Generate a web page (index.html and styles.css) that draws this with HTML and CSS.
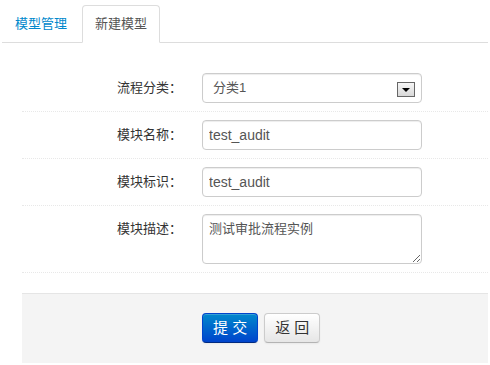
FILE: index.html
```html
<!DOCTYPE html>
<html lang="zh-CN">
<head>
    <meta charset="UTF-8">
    <title>新建模型</title>
    <link rel="stylesheet" href="styles.css">
</head>
<body>
    <ul class="nav-tabs">
        <li><a href="#">模型管理</a></li>
        <li class="active"><a href="#">新建模型</a></li>
    </ul>

    <form class="form-horizontal">
        <div class="control-group">
            <label class="control-label">流程分类：</label>
            <div class="controls">
                <div class="select-wrap">
                    <select>
                        <option>分类1</option>
                    </select>
                    <span class="select-arrow"></span>
                </div>
            </div>
        </div>
        <div class="control-group">
            <label class="control-label">模块名称：</label>
            <div class="controls">
                <input type="text" value="test_audit">
            </div>
        </div>
        <div class="control-group">
            <label class="control-label">模块标识：</label>
            <div class="controls">
                <input type="text" value="test_audit">
            </div>
        </div>
        <div class="control-group">
            <label class="control-label">模块描述：</label>
            <div class="controls">
                <textarea>测试审批流程实例</textarea>
            </div>
        </div>

        <div class="form-actions">
            <button type="button" class="btn btn-primary">提 交</button>
            <button type="button" class="btn">返 回</button>
        </div>
    </form>
</body>
</html>
```

FILE: styles.css
```css
* {
    box-sizing: border-box;
}

body {
    margin: 0;
    padding: 5px 2px 0 2px;
    font-family: "Liberation Sans", "Noto Sans CJK SC", sans-serif;
    font-size: 13px;
    line-height: 20px;
    color: #333;
    background: #fff;
}

/* tabs */
.nav-tabs {
    list-style: none;
    margin: 0 0 22px 0;
    padding: 0;
    display: flex;
    border-bottom: 1px solid #ddd;
}

.nav-tabs li {
    margin-bottom: -1px;
    margin-right: 2px;
}

.nav-tabs a {
    display: block;
    padding: 8px 12px;
    line-height: 20px;
    border: 1px solid transparent;
    border-radius: 4px 4px 0 0;
    color: #0088cc;
    text-decoration: none;
}

.nav-tabs .active a {
    color: #555;
    background: #fff;
    border-color: #ddd #ddd transparent;
}

/* form */
.form-horizontal {
    margin-left: 20px;
}

.control-group {
    display: flex;
    padding: 8px 0;
    border-bottom: 1px dotted #e8e8e8;
}

.control-label {
    width: 160px;
    padding-top: 5px;
    text-align: right;
    flex-shrink: 0;
}

.controls {
    margin-left: 20px;
}

input,
select,
textarea {
    display: block;
    width: 220px;
    height: 30px;
    padding: 4px 6px;
    font-family: "Liberation Sans", "Noto Sans CJK SC", sans-serif;
    font-size: 14px;
    line-height: 20px;
    color: #555;
    background: #fff;
    border: 1px solid #ccc;
    border-radius: 4px;
    box-shadow: inset 0 1px 1px rgba(0, 0, 0, 0.075);
    margin: 0;
}

textarea {
    height: 50px;
    font-size: 13px;
}

.select-wrap {
    position: relative;
}

select {
    appearance: none;
    -webkit-appearance: none;
    padding-left: 10px;
    font-size: 13px;
}

.select-arrow {
    position: absolute;
    top: 9px;
    right: 7px;
    width: 18px;
    height: 15px;
    border: 1px solid #666;
    background: linear-gradient(#f6f6f6, #d8d8d8);
    pointer-events: none;
}

.select-arrow::after {
    content: "";
    position: absolute;
    left: 4px;
    top: 5px;
    border-left: 4px solid transparent;
    border-right: 4px solid transparent;
    border-top: 4px solid #000;
}

/* actions */
.form-actions {
    margin-top: 20px;
    padding: 19px 20px 20px 180px;
    background: #f4f4f4;
    border-top: 1px solid #e5e5e5;
    display: flex;
    gap: 6px;
}

.btn {
    padding: 4px 10px;
    font-family: "Liberation Sans", "Noto Sans CJK SC", sans-serif;
    font-size: 15px;
    line-height: 20px;
    color: #333;
    background: linear-gradient(#ffffff, #e6e6e6);
    border: 1px solid #ccc;
    border-bottom-color: #b3b3b3;
    border-radius: 4px;
    box-shadow: inset 0 1px 0 rgba(255, 255, 255, 0.2), 0 1px 2px rgba(0, 0, 0, 0.05);
    cursor: pointer;
}

.btn-primary {
    color: #fff;
    background: linear-gradient(#0088cc, #0044cc);
    border-color: #0044cc #0044cc #002a80;
}
```
